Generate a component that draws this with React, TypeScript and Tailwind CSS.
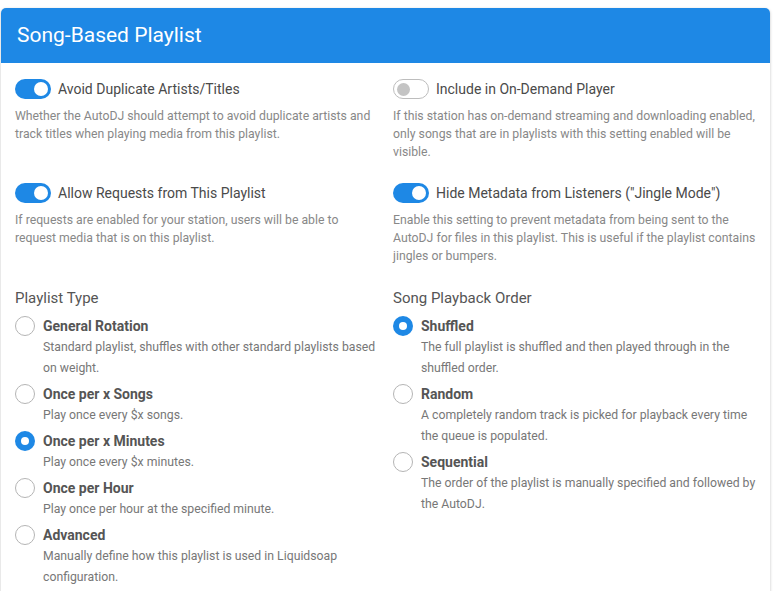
import React from 'react';

const toggles = [
  {
    on: true,
    label: 'Avoid Duplicate Artists/Titles',
    description:
      'Whether the AutoDJ should attempt to avoid duplicate artists and track titles when playing media from this playlist.'
  },
  {
    on: false,
    label: 'Include in On-Demand Player',
    description:
      'If this station has on-demand streaming and downloading enabled, only songs that are in playlists with this setting enabled will be visible.'
  },
  {
    on: true,
    label: 'Allow Requests from This Playlist',
    description:
      'If requests are enabled for your station, users will be able to request media that is on this playlist.'
  },
  {
    on: true,
    label: 'Hide Metadata from Listeners ("Jingle Mode")',
    description:
      'Enable this setting to prevent metadata from being sent to the AutoDJ for files in this playlist. This is useful if the playlist contains jingles or bumpers.'
  }
];

const playlistTypes = [
  { label: 'General Rotation', description: 'Standard playlist, shuffles with other standard playlists based on weight.', checked: false },
  { label: 'Once per x Songs', description: 'Play once every $x songs.', checked: false },
  { label: 'Once per x Minutes', description: 'Play once every $x minutes.', checked: true },
  { label: 'Once per Hour', description: 'Play once per hour at the specified minute.', checked: false },
  { label: 'Advanced', description: 'Manually define how this playlist is used in Liquidsoap configuration.', checked: false }
];

const playbackOrders = [
  { label: 'Shuffled', description: 'The full playlist is shuffled and then played through in the shuffled order.', checked: true },
  { label: 'Random', description: 'A completely random track is picked for playback every time the queue is populated.', checked: false },
  { label: 'Sequential', description: 'The order of the playlist is manually specified and followed by the AutoDJ.', checked: false }
];

type Option = { label: string; description: string; checked: boolean };

const Toggle = ({ on }: { on: boolean }) =>
  on ? (
    <span className="flex h-[20px] w-[36px] shrink-0 items-center justify-end rounded-full bg-[#1e88e5] pr-[3px]">
      <span className="h-[14px] w-[14px] rounded-full bg-white" />
    </span>
  ) : (
    <span className="flex h-[20px] w-[36px] shrink-0 items-center rounded-full border border-[#bdbdbd] bg-white pl-[3px]">
      <span className="h-[13px] w-[13px] rounded-full bg-[#c4c4c4]" />
    </span>
  );

const Radio = ({ checked }: { checked: boolean }) =>
  checked ? (
    <span className="flex h-[20px] w-[20px] shrink-0 items-center justify-center rounded-full bg-[#1e88e5]">
      <span className="h-[8px] w-[8px] rounded-full bg-white" />
    </span>
  ) : (
    <span className="h-[20px] w-[20px] shrink-0 rounded-full border border-[#b5b5b5] bg-white" />
  );

const RadioGroup = ({ title, options }: { title: string; options: Option[] }) => (
  <div>
    <div className="mb-[5px] text-[15px] leading-[23px] text-[#555]">{title}</div>
    {options.map((opt) => (
      <div key={opt.label} className="mb-[4px] flex">
        <div className="flex h-[22px] w-[28px] shrink-0 items-center">
          <Radio checked={opt.checked} />
        </div>
        <div>
          <div className="text-[14px] font-bold leading-[22px] text-[#555]">{opt.label}</div>
          <div className="text-[12.25px] leading-[21px] text-[#777]">{opt.description}</div>
        </div>
      </div>
    ))}
  </div>
);

const App = () => {
  return (
    <div className="min-h-[591px] bg-white pt-[8px] font-['Roboto',sans-serif]">
      <div className="ml-[1px] w-[769px] overflow-hidden rounded-t-[5px] bg-white shadow-[0_1px_3px_rgba(0,0,0,0.25)]">
        <div className="flex h-[55px] items-center bg-[#1e88e5] px-[16px]">
          <h2 className="text-[21px] font-normal text-white">Song-Based Playlist</h2>
        </div>
        <div className="px-[14px] pt-[16px] pb-[10px]">
          <div className="grid grid-cols-2 gap-x-[15px] gap-y-[22px]">
            {toggles.map((t) => (
              <div key={t.label}>
                <div className="flex h-[20px] items-center gap-[7px]">
                  <Toggle on={t.on} />
                  <span className="text-[14px] text-[#4a4a4a]">{t.label}</span>
                </div>
                <p className="mt-[8px] text-[12.25px] leading-[18px] text-[#888]">{t.description}</p>
              </div>
            ))}
          </div>
          <div className="mt-[22px] grid grid-cols-2 gap-x-[15px]">
            <RadioGroup title="Playlist Type" options={playlistTypes} />
            <RadioGroup title="Song Playback Order" options={playbackOrders} />
          </div>
        </div>
      </div>
    </div>
  );
};

export default App;
